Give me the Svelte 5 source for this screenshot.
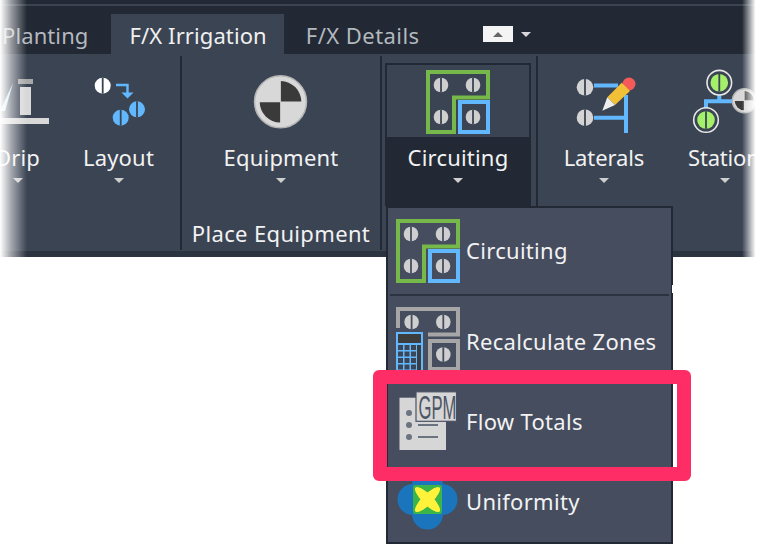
<script>
  const calcRows = [0, 1, 2, 3];
  const calcCols = [0, 1];
</script>

{#snippet screw(x, y, r, fill, slit)}
  <circle cx={x} cy={y} {r} {fill} />
  <rect x={x - 0.9} y={y - r} width="1.8" height={r * 2} fill={slit} />
{/snippet}

{#snippet circuitIcon(slit)}
  <svg class="icon" viewBox="0 0 64 64">
    <rect x="34" y="32" width="28" height="30" fill="none" stroke="#62b8ff" stroke-width="4" />
    <path d="M2 2H62V27.5H28V62H2Z" fill="none" stroke="#76b84a" stroke-width="4" />
    {@render screw(15, 15, 7.3, "#cfcfcf", slit)}
    {@render screw(47, 15, 7.3, "#cfcfcf", slit)}
    {@render screw(15, 47, 7.3, "#cfcfcf", slit)}
    {@render screw(47, 47, 7.3, "#cfcfcf", slit)}
  </svg>
{/snippet}

{#snippet checker(x, y, r)}
  <circle cx={x} cy={y} {r} fill="#d8d8d8" stroke="#b4b4b4" stroke-width="1.5" />
  <path d="M{x + 0.4} {y - 0.4}V{y - r * 0.8}A{r * 0.8} {r * 0.8} 0 0 1 {x + r * 0.8} {y - 0.4}Z" fill="#3a3a3a" />
  <path d="M{x - 0.4} {y + 0.4}V{y + r * 0.8}A{r * 0.8} {r * 0.8} 0 0 1 {x - r * 0.8} {y + 0.4}Z" fill="#3a3a3a" />
{/snippet}

<div class="page">
  <div class="ribbon">
    <div class="title-strip"></div>

    <div class="tabs">
      <span class="tab first">Planting</span>
      <span class="tab active">F/X Irrigation</span>
      <span class="tab">F/X Details</span>
      <span class="collapse"><i></i></span>
      <span class="collapse-arrow"></span>
    </div>

    <div class="panels">
      <div class="group g1">
        <div class="item">
          <svg class="icon" viewBox="0 0 64 64">
            <path d="M27 13L14 41H19Z" fill="#c4e5fb" />
            <rect x="32" y="9" width="15" height="5" fill="#a8a8a8" />
            <rect x="34" y="17" width="11" height="28" fill="#d8d8d8" />
            <rect x="0" y="48" width="63" height="6" fill="#d8d8d8" />
          </svg>
          <span class="label">Drip</span>
          <span class="arrow"></span>
        </div>
        <div class="item">
          <svg class="icon" viewBox="0 0 64 64">
            {@render screw(15.7, 15.7, 8, "#ffffff", "#3b4453")}
            <path d="M29 15H40.5V24" fill="none" stroke="#62b8ff" stroke-width="2.4" />
            <path d="M34.5 22.5H46.5L40.5 28.5Z" fill="#62b8ff" />
            {@render screw(33.7, 47.7, 8, "#62b8ff", "#3b4453")}
            {@render screw(50, 39.3, 8, "#62b8ff", "#3b4453")}
          </svg>
          <span class="label">Layout</span>
          <span class="arrow"></span>
        </div>
      </div>

      <div class="sep"></div>

      <div class="group g2">
        <div class="item">
          <svg class="icon" viewBox="0 0 64 64">
            {@render checker(31.5, 31.8, 26)}
          </svg>
          <span class="label">Equipment</span>
          <span class="arrow"></span>
        </div>
        <span class="group-title">Place Equipment</span>
      </div>

      <div class="sep"></div>

      <div class="group g3">
        <div class="item pressed">
          <div class="pressed-top">
            {@render circuitIcon("#3b4453")}
          </div>
          <span class="label">Circuiting</span>
          <span class="arrow"></span>
        </div>
      </div>

      <div class="sep"></div>

      <div class="group g4">
        <div class="item">
          <svg class="icon" viewBox="0 0 64 64">
            {@render screw(13, 17.3, 8.3, "#d4d4d4", "#3b4453")}
            {@render screw(13, 47.7, 8.3, "#d4d4d4", "#3b4453")}
            <path d="M22 15.5H46M22 47.7H54M54 25V63" fill="none" stroke="#62b8ff" stroke-width="4" />
            <circle cx="57" cy="14" r="6.5" fill="#f55a5a" />
            <path d="M35.3 27.3L49.7 12.7L58 21L43 35Z" fill="#f2c037" />
            <path d="M30.3 40.7L35.3 27.3L43 35Z" fill="#eeeeee" />
          </svg>
          <span class="label laterals">Laterals</span>
          <span class="arrow"></span>
        </div>
        <div class="item">
          <svg class="icon" viewBox="0 0 64 64">
            <path d="M26.3 25V31.3H13V38M26 31.3H45" fill="none" stroke="#62b8ff" stroke-width="4" />
            <circle cx="26.3" cy="12.7" r="12.3" fill="#3b4453" stroke="#e8e8e8" stroke-width="1.6" />
            {@render screw(26.3, 12.7, 8.8, "#a5f06a", "#3b4453")}
            <circle cx="13" cy="50" r="12.3" fill="#3b4453" stroke="#e8e8e8" stroke-width="1.6" />
            {@render screw(13, 50, 8.8, "#a5f06a", "#3b4453")}
            {@render checker(51.3, 30.7, 12)}
          </svg>
          <span class="label stations">Stations</span>
          <span class="arrow"></span>
        </div>
      </div>
    </div>

    <div class="ribbon-foot"></div>
    <div class="fade left"></div>
    <div class="fade right"></div>
  </div>

  <div class="menu">
    <div class="row first-row">
      {@render circuitIcon("#454d5f")}
      <span class="label">Circuiting</span>
    </div>
    <div class="divider"></div>
    <div class="row first-row recalc">
      <svg class="icon" viewBox="0 0 64 64">
        <path d="M2 21V2H62V27.5H32" fill="none" stroke="#a6a6a6" stroke-width="4" />
        <rect x="34" y="34" width="28" height="28" fill="none" stroke="#a6a6a6" stroke-width="4" />
        {@render screw(15.6, 15, 7.3, "#cfcfcf", "#454d5f")}
        {@render screw(47.3, 15, 7.3, "#cfcfcf", "#454d5f")}
        {@render screw(47.3, 47.5, 7.3, "#cfcfcf", "#454d5f")}
        <rect x="0" y="25" width="27" height="39" fill="#62b8ff" />
        <rect x="2" y="27" width="23" height="9" fill="#3d3d3d" />
        {#each calcRows as r}
          {#each calcCols as c}
            <rect x={2 + c * 6.5} y={38 + r * 6.5} width="5" height="5" fill="#3d4656" />
          {/each}
          <rect x="15" y={38 + r * 6.5} width="5" height="5" fill="#3d4656" />
        {/each}
        <rect x="21" y="38" width="4" height="26" fill="#3d3d3d" />
      </svg>
      <span class="label">Recalculate Zones</span>
    </div>
    <div class="row">
      <svg class="icon" viewBox="0 0 64 64">
        <rect x="3.5" y="7.7" width="46.5" height="52.3" fill="#d6d6d6" />
        <rect x="20" y="1.8" width="40.5" height="29.5" fill="#d6d6d6" stroke="#4a5262" stroke-width="1.2" />
        <text class="gpm" transform="translate(22.5 28.5) scale(0.49 1)" font-size="34">GPM</text>
        <circle cx="13" cy="23" r="3" fill="#6b7280" />
        <circle cx="13" cy="35" r="3" fill="#6b7280" />
        <circle cx="13" cy="47" r="3" fill="#6b7280" />
        <path d="M22 35H42M22 47H42" stroke="#6b7280" stroke-width="2" />
      </svg>
      <span class="label">Flow Totals</span>
    </div>
    <div class="row">
      <svg class="icon" viewBox="0 0 64 64">
        <circle cx="31.5" cy="15" r="15.5" fill="#1b75bc" />
        <circle cx="17" cy="29.5" r="15.5" fill="#1b75bc" />
        <circle cx="46" cy="29.5" r="15.5" fill="#1b75bc" />
        <circle cx="31.5" cy="44" r="15.5" fill="#1b75bc" />
        <rect x="17" y="15" width="29" height="29" rx="2" fill="#39b54a" />
        <g fill="#fff23a">
          <ellipse cx="31.5" cy="29.5" rx="17" ry="5.2" transform="rotate(45 31.5 29.5)" />
          <ellipse cx="31.5" cy="29.5" rx="17" ry="5.2" transform="rotate(-45 31.5 29.5)" />
        </g>
      </svg>
      <span class="label">Uniformity</span>
    </div>
  </div>

  <div class="notch"></div>
  <div class="highlight"></div>
</div>

<style>
  :global(body) {
    margin: 0;
    background: #fff;
  }

  .page {
    position: relative;
    width: 758px;
    height: 558px;
    overflow: hidden;
    background: #fff;
    font-family: "Noto Sans", "Open Sans", sans-serif;
  }

  .ribbon {
    position: relative;
    height: 257px;
    overflow: hidden;
    display: flex;
    flex-direction: column;
    background: #222934;
  }

  .title-strip {
    height: 14px;
    box-sizing: border-box;
    border-top: 4px solid #222934;
  }
  .title-strip::before {
    content: "";
    display: block;
    height: 2px;
    background: #3b4453;
  }

  .tabs {
    height: 40px;
    display: flex;
    align-items: stretch;
    padding-left: 2px;
    background: #222934;
    font-size: 22px;
    color: #b4b8bf;
  }
  .tab {
    line-height: 42px;
    padding: 0 23px 0 22px;
    white-space: nowrap;
    letter-spacing: 0.45px;
  }
  .tab.first {
    padding: 0 23px 0 0;
    letter-spacing: 0.1px;
  }
  .tab.active {
    padding: 0 17px 0 18px;
    background: #3b4453;
    color: #f0f0f0;
    letter-spacing: 0.1px;
  }
  .collapse {
    align-self: center;
    width: 30px;
    height: 16px;
    margin-left: 40px;
    background: #f4f4f4;
    display: flex;
    align-items: center;
    justify-content: center;
  }
  .collapse i {
    border-left: 5px solid transparent;
    border-right: 5px solid transparent;
    border-bottom: 5px solid #666;
  }
  .collapse-arrow {
    align-self: center;
    margin-left: 8px;
    border-left: 5px solid transparent;
    border-right: 5px solid transparent;
    border-top: 5px solid #d8d8d8;
  }

  .panels {
    height: 197px;
    display: flex;
    background: #3b4453;
  }
  .ribbon-foot {
    height: 6px;
    background: #2b3240;
  }
  .sep {
    flex: none;
    width: 2px;
    margin: 2px 0 1px;
    background: #222934;
  }
  .group {
    display: flex;
    flex: none;
  }
  .g1 {
    width: 213px;
    margin-left: -33px;
  }
  .g2 {
    width: 198px;
    flex-direction: column;
    align-items: center;
    justify-content: space-between;
    padding-bottom: 3px;
    box-sizing: border-box;
  }
  .g3 {
    width: 154px;
    padding-left: 3px;
    box-sizing: border-box;
  }
  .g4 {
    padding-left: 5px;
  }

  .item {
    display: flex;
    flex-direction: column;
    align-items: center;
    width: 101px;
    padding-top: 16px;
  }
  .g2 .item {
    width: auto;
  }
  .g4 .item {
    width: 121px;
    flex: none;
  }
  .item.pressed {
    width: 146px;
    height: 143px;
    box-sizing: border-box;
    margin-top: 9px;
    padding-top: 0;
    border: 2px solid #222934;
    border-bottom: 0;
    background: #222934;
  }
  .pressed-top {
    align-self: stretch;
    height: 72px;
    box-sizing: border-box;
    padding-top: 5px;
    display: flex;
    justify-content: center;
    background: #3b4453;
  }

  .icon {
    display: block;
    flex: none;
    width: 64px;
    height: 64px;
    overflow: visible;
  }
  .label {
    margin-top: 8px;
    font-size: 22px;
    line-height: 30px;
    letter-spacing: 0.2px;
    color: #f2f2f2;
    white-space: nowrap;
  }
  .label.laterals {
    margin-left: 1px;
    letter-spacing: -0.1px;
  }
  .label.stations {
    margin-left: 9px;
    letter-spacing: -0.2px;
  }
  .pressed .label {
    margin-top: 5px;
  }
  .arrow {
    margin-top: 6px;
    border-left: 5px solid transparent;
    border-right: 5px solid transparent;
    border-top: 5px solid #cfcfcf;
  }
  .group-title {
    font-size: 22px;
    line-height: 30px;
    letter-spacing: 0.35px;
    color: #f2f2f2;
    white-space: nowrap;
  }

  .fade {
    position: absolute;
    top: 0;
    bottom: 0;
    pointer-events: none;
  }
  .fade.left {
    left: 0;
    width: 27px;
    background: linear-gradient(to right, #fff 0%, rgba(255, 255, 255, 0.55) 40%, rgba(255, 255, 255, 0) 100%);
  }
  .fade.right {
    right: 0;
    width: 16px;
    background: linear-gradient(to left, #fff 0%, #fff 15%, rgba(255, 255, 255, 0) 100%);
  }

  .menu {
    position: absolute;
    left: 386px;
    top: 206px;
    width: 287px;
    height: 338px;
    box-sizing: border-box;
    border: 2px solid #222934;
    background: #454d5f;
    display: flex;
    flex-direction: column;
  }
  .row {
    flex: none;
    height: 80px;
    display: flex;
    align-items: center;
    gap: 6px;
    padding-left: 8px;
  }
  .row.first-row {
    height: 86px;
  }
  .row .label {
    margin-top: -2px;
    letter-spacing: 0.3px;
  }
  .row.recalc .label {
    margin-top: 3px;
  }
  .divider {
    flex: none;
    height: 2px;
    margin: 0 2px;
    background: #2b3240;
  }
  .gpm {
    font-family: "Liberation Sans", sans-serif;
    fill: #4d5566;
  }

  .notch {
    position: absolute;
    left: 672px;
    top: 285px;
    width: 2px;
    height: 8px;
    background: #fff;
  }
  .highlight {
    position: absolute;
    left: 373px;
    top: 370px;
    width: 318px;
    height: 111px;
    box-sizing: border-box;
    border: 14px solid #ff2d66;
    border-radius: 6px;
  }
</style>
